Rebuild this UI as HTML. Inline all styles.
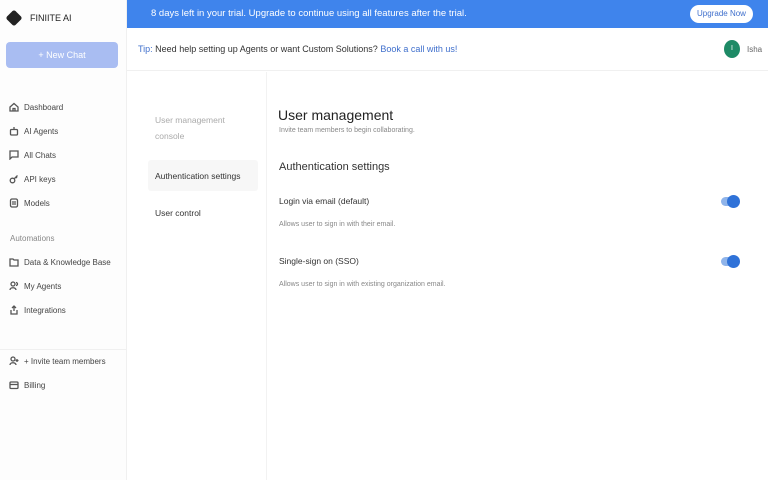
<!DOCTYPE html><html><head><style>
*{box-sizing:border-box;margin:0;padding:0}
body{width:768px;height:480px;overflow:hidden;font-family:"Liberation Sans",sans-serif;background:#fff;position:relative;color:#333}
.side{position:absolute;left:0;top:0;width:127px;height:480px;background:#fdfdfd;border-right:1px solid #f0f0f0}
.logo{position:absolute;left:6px;top:10px;width:16px;height:16px;background:#222;transform:rotate(45deg) scale(.75);border-radius:3px}
.brand{position:absolute;left:30px;top:13px;font-size:9px;color:#222}
.new{position:absolute;left:6px;top:42px;width:112px;height:26px;background:#a9bdf2;border-radius:4px;color:#fff;font-size:9px;text-align:center;line-height:26px}
.it{position:absolute;left:9px;font-size:8px;color:#444;display:flex;align-items:center}
.it svg{width:10px;height:10px;margin-right:5px;fill:none;stroke:#555;stroke-width:1.3}
.auto{position:absolute;left:10px;top:234px;font-size:8px;color:#888}
.sep{position:absolute;left:0;top:349px;width:127px;border-top:1px solid #f0f0f0}
.ban{position:absolute;left:127px;top:0;width:641px;height:28px;background:#3f84ec;color:#fff;font-size:9.5px;line-height:28px;padding-left:24px}
.up{position:absolute;right:15px;top:5px;width:63px;height:18px;background:#fff;border-radius:9px;color:#3f6fcc;font-size:8px;line-height:18px;text-align:center}
.tip{position:absolute;left:138px;top:44px;font-size:9px;color:#333}
.tip b{font-weight:normal;color:#3f6fcc}
.hl{position:absolute;left:127px;top:70px;width:641px;border-top:1px solid #f0f0f0}
.av{position:absolute;left:724px;top:40px;width:16px;height:18px;border-radius:50%;background:#1e8a66;color:#fff;font-size:7px;text-align:center;line-height:18px}
.isha{position:absolute;left:747px;top:45px;font-size:8px;color:#666}
.vl{position:absolute;left:266px;top:72px;height:408px;border-left:1px solid #f2f2f2}
.n{position:absolute;left:155px;font-size:8.5px;color:#333}
.act{position:absolute;left:148px;top:160px;width:110px;height:31px;background:#f7f7f7;border-radius:3px}
.h1{position:absolute;left:278px;top:107px;font-size:14px;color:#222}
.s{position:absolute;left:279px;font-size:7px;color:#888}
.h2{position:absolute;left:279px;top:161px;font-size:11px;color:#333}
.l{position:absolute;left:279px;font-size:8.5px;color:#333}
.tg{position:absolute;left:721px;width:17px;height:9px;border-radius:5px;background:#8fb4ea}
.tg:after{content:"";position:absolute;right:-2px;top:-2px;width:13px;height:13px;border-radius:50%;background:#2f72d8}
</style></head><body>
<div class="side">
<div class="logo"></div><div class="brand">FINIITE AI</div>
<div class="new">+ New Chat</div>
<div class="it" style="top:102px"><svg viewBox="0 0 10 10"><path d="M1 5L5 1.5 9 5V9H1z M4 9V6.5h2V9"/></svg>Dashboard</div>
<div class="it" style="top:126px"><svg viewBox="0 0 10 10"><rect x="1.5" y="3.5" width="7" height="5.5" rx="1"/><path d="M5 1v2.5"/></svg>AI Agents</div>
<div class="it" style="top:150px"><svg viewBox="0 0 10 10"><path d="M1 1h8v6H3L1 9z"/></svg>All Chats</div>
<div class="it" style="top:174px"><svg viewBox="0 0 10 10"><circle cx="3.5" cy="6.5" r="2.3"/><path d="M5 5L8.5 1.5M7 3l1 1"/></svg>API keys</div>
<div class="it" style="top:198px"><svg viewBox="0 0 10 10"><rect x="1.5" y="1" width="7" height="8" rx="1.5"/><path d="M3 4h4M3 6h4"/></svg>Models</div>
<div class="auto">Automations</div>
<div class="it" style="top:257px"><svg viewBox="0 0 10 10"><path d="M1 2h3l1 1h4v6H1z"/></svg>Data &amp; Knowledge Base</div>
<div class="it" style="top:281px"><svg viewBox="0 0 10 10"><circle cx="4" cy="3" r="2"/><path d="M1 9c0-3 6-3 6 0M7 1.5a1.5 1.5 0 010 3"/></svg>My Agents</div>
<div class="it" style="top:305px"><svg viewBox="0 0 10 10"><path d="M5 1v5M3 3l2-2 2 2M2 5v4h6V5"/></svg>Integrations</div>
<div class="sep"></div>
<div class="it" style="top:356px"><svg viewBox="0 0 10 10"><circle cx="4" cy="3" r="2"/><path d="M1 9c0-3 6-3 6 0M8 3v3M6.5 4.5h3"/></svg>+ Invite team members</div>
<div class="it" style="top:380px"><svg viewBox="0 0 10 10"><rect x="1" y="2" width="8" height="6.5" rx="1"/><path d="M1 4.5h8"/></svg>Billing</div>
</div>
<div class="ban">8 days left in your trial. Upgrade to continue using all features after the trial.<div class="up">Upgrade Now</div></div>
<div class="tip"><b>Tip:</b> Need help setting up Agents or want Custom Solutions? <b>Book a call with us!</b></div>
<div class="av">I</div><div class="isha">Isha</div>
<div class="hl"></div><div class="vl"></div>
<div class="n" style="top:112px;color:#aaa;line-height:16px">User management<br>console</div>
<div class="act"></div>
<div class="n" style="top:171px">Authentication settings</div>
<div class="n" style="top:208px">User control</div>
<div class="h1">User management</div>
<div class="s" style="top:127px">Invite team members to begin collaborating.</div>
<div class="h2">Authentication settings</div>
<div class="l" style="top:196px">Login via email (default)</div>
<div class="tg" style="top:197px"></div>
<div class="s" style="top:221px">Allows user to sign in with their email.</div>
<div class="l" style="top:256px">Single-sign on (SSO)</div>
<div class="tg" style="top:257px"></div>
<div class="s" style="top:281px">Allows user to sign in with existing organization email.</div>
</body></html>
